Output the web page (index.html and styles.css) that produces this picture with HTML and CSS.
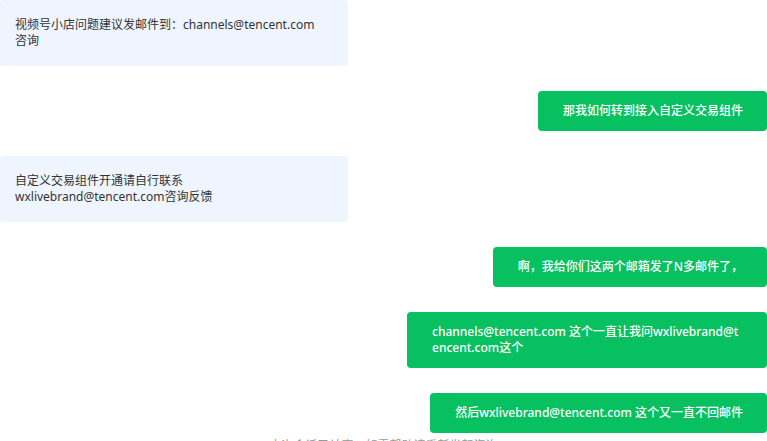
FILE: index.html
```html
<!DOCTYPE html>
<html lang="zh-CN">
<head>
    <meta charset="UTF-8">
    <meta name="viewport" content="width=device-width, initial-scale=1.0">
    <title>咨询记录</title>
    <link rel="stylesheet" href="styles.css">
</head>
<body>
    <div class="chat">
        <div class="msg msg-left">
            <div class="bubble">视频号小店问题建议发邮件到：channels@tencent.com咨询</div>
        </div>
        <div class="msg msg-right">
            <div class="bubble">那我如何转到接入自定义交易组件</div>
        </div>
        <div class="msg msg-left">
            <div class="bubble">自定义交易组件开通请自行联系wxlivebrand@tencent.com咨询反馈</div>
        </div>
        <div class="msg msg-right">
            <div class="bubble">啊，我给你们这两个邮箱发了N多邮件了，</div>
        </div>
        <div class="msg msg-right">
            <div class="bubble">channels@tencent.com 这个一直让我问wxlivebrand@tencent.com这个</div>
        </div>
        <div class="msg msg-right">
            <div class="bubble">然后wxlivebrand@tencent.com 这个又一直不回邮件</div>
        </div>
        <div class="tip">本次会话已结束，如需帮助请重新发起咨询</div>
    </div>
</body>
</html>
```

FILE: styles.css
```css
body {
    margin: 0;
    background: #fff;
    font-family: "Noto Sans", "Noto Sans CJK SC", sans-serif;
    font-size: 12px;
    line-height: 16px;
    overflow: hidden;
}

.chat {
    display: flex;
    flex-direction: column;
    gap: 25px;
}

.msg {
    display: flex;
}

.msg-right {
    justify-content: flex-end;
}

.bubble {
    border-radius: 4px;
}

.msg-left .bubble {
    width: 348px;
    box-sizing: border-box;
    padding: 17px 26px 17px 15px;
    background: #eef5ff;
    color: #333;
}

.msg-right .bubble {
    max-width: 360px;
    box-sizing: border-box;
    padding: 12px 24px 12px 25px;
    background: #07c160;
    color: #fff;
    font-weight: 500;
    word-break: break-all;
}

.tip {
    margin-top: -20px;
    text-align: center;
    color: #999;
    font-size: 12px;
}
```
